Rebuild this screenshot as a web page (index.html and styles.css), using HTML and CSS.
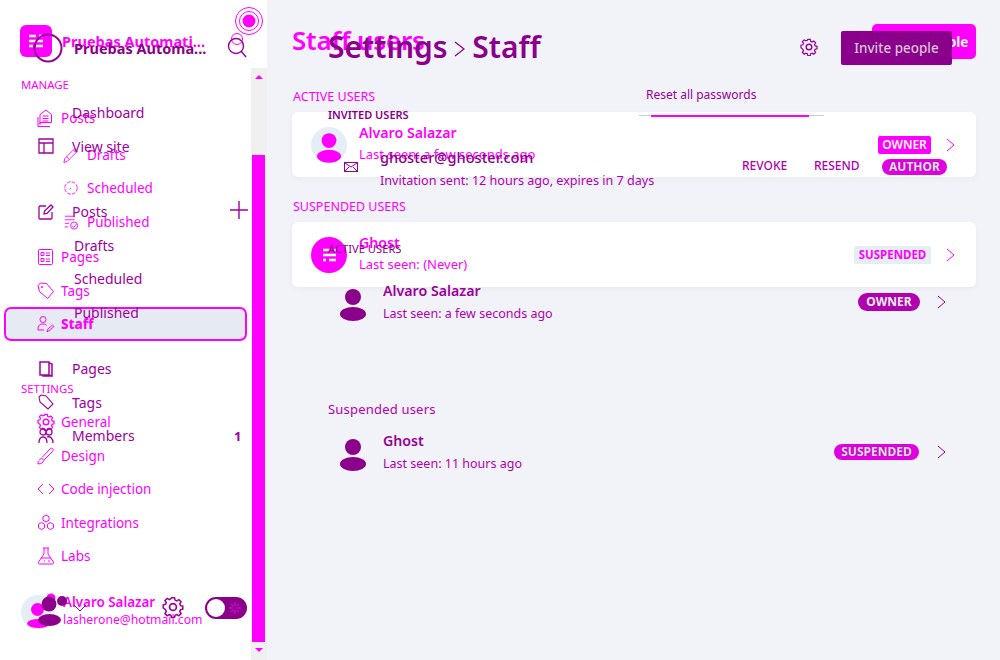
FILE: index.html
```html
<!DOCTYPE html>
<html lang="es">
<head>
<meta charset="UTF-8">
<title>Staff</title>
<link rel="stylesheet" href="styles.css">
</head>
<body>
<svg class="defs" width="0" height="0">
    <symbol id="person" viewBox="0 0 28 32">
        <circle cx="14" cy="8" r="8"/><ellipse cx="14" cy="25" rx="13" ry="7"/>
    </symbol>
    <symbol id="chevron" viewBox="0 0 10 14">
        <path d="M1 1l7 6-7 6" fill="none" stroke="currentColor"/>
    </symbol>
    <symbol id="gear" viewBox="0 0 18 18">
        <path d="M7.6 1h2.8l.5 2.2 1.5.7 2-1.1 2 2-1.2 1.9.7 1.6 2.1.5v2.8l-2.1.5-.7 1.6 1.2 1.9-2 2-2-1.1-1.5.7-.5 2.1H7.6l-.5-2.1-1.5-.7-2 1.1-2-2 1.2-1.9-.7-1.6L0 10.4V7.6l2.1-.5.7-1.6L1.6 3.6l2-2 2 1.1 1.5-.7z" transform="translate(1 .5) scale(.89)" fill="none" stroke="currentColor" stroke-width="1.4"/>
        <circle cx="9" cy="9" r="2.8" fill="none" stroke="currentColor" stroke-width="1.4"/>
    </symbol>
</svg>

<!-- capa clara: vista nueva -->
<div class="layer layer-new">
    <aside class="side">
        <div class="brand">
            <div class="logo">
                <svg width="32" height="32" viewBox="0 0 32 32"><path d="M9 11h7M19 11h4M9 16h14M9 21h4M16 21h7" stroke="#fff" stroke-width="2.5"/></svg>
            </div>
            <span class="brand-name">Pruebas Automati...</span>
            <svg class="target" width="30" height="30" viewBox="0 0 30 30"><circle cx="15" cy="15" r="13.5" fill="#fff" stroke="#f0f"/><circle cx="15" cy="15" r="9.5" fill="none" stroke="#f0f"/><circle cx="15" cy="15" r="6.5" fill="#f0f"/></svg>
            <svg class="lens-new" width="12" height="12" viewBox="0 0 12 12"><circle cx="6" cy="6" r="5.5" fill="none" stroke="#f0f"/></svg>
        </div>
        <div class="side-body">
            <nav class="nav">
                <div class="nav-head">MANAGE</div>
                <a class="item">
                    <svg class="ico" viewBox="0 0 18 18"><path d="M3 15.5V5.5L9 1l5.5 4.5v8H3zM1 17.5h12M1 8v9.5M5.5 7h6M5.5 9.5h6M5.5 12h6" fill="none" stroke="currentColor"/></svg>Posts
                </a>
                <div class="sub">
                    <a class="item">
                        <svg class="ico" viewBox="0 0 18 18"><path d="M2 13L13 2l3 3L5 16l-4 1.5zM4 11l3 3M12 4l2 2" fill="none" stroke="currentColor"/></svg>Drafts
                    </a>
                    <a class="item">
                        <svg class="ico" viewBox="0 0 18 18"><circle cx="9" cy="9" r="7" fill="none" stroke="currentColor" stroke-dasharray="4 1.5"/><path d="M9 9l-1.5 1.5" stroke="currentColor"/></svg>Scheduled
                    </a>
                    <a class="item">
                        <svg class="ico" viewBox="0 0 18 18"><path d="M2 2.5h11M2 6.5h11M2 10.5h5M2 14.5h4M10 13l2 2 3-3.5" fill="none" stroke="currentColor"/><circle cx="12.5" cy="13" r="4" fill="none" stroke="currentColor"/></svg>Published
                    </a>
                </div>
                <a class="item">
                    <svg class="ico" viewBox="0 0 18 18"><rect x="1.5" y="1.5" width="14" height="15" rx="1" fill="none" stroke="currentColor"/><path d="M4 4.5h3v3H4zM4 10.5h3v3H4zM9 5h4M9 7.5h4M9 11h4M9 13.5h4" fill="none" stroke="currentColor"/></svg>Pages
                </a>
                <a class="item">
                    <svg class="ico" viewBox="0 0 18 18"><path d="M1 3.5L3.5 1l6 .5 7 8-6 7-8-7z" fill="none" stroke="currentColor"/><circle cx="5" cy="5" r="1" fill="currentColor"/></svg>Tags
                </a>
                <a class="item current">
                    <svg class="ico" viewBox="0 0 18 18"><circle cx="6" cy="4.5" r="3" fill="none" stroke="currentColor"/><path d="M1 15c0-5 2-6 5-6 2 0 3 .5 3.5 1.5M1 15h6M11 16l-1 1 .5-2.5 5-4.5 1.5 1.5-5 4.5z" fill="none" stroke="currentColor"/></svg>Staff
                </a>
                <div class="nav-head settings">SETTINGS</div>
                <a class="item">
                    <svg class="ico" viewBox="0 0 18 18"><use href="#gear"/></svg>General
                </a>
                <a class="item">
                    <svg class="ico" viewBox="0 0 18 18"><path d="M1 17c0-3 .5-3 1.5-4l2-2 2.5 2.5-2 2.5c-1 1-2.500.5-4 1zM5 10.500L13 2c1-1 2.500-1 3 0s0 2-1 3l-8 8" fill="none" stroke="currentColor"/></svg>Design
                </a>
                <a class="item">
                    <svg class="ico" viewBox="0 0 18 18"><path d="M6 4L1 9l5 5M12 4l5 5-5 5" fill="none" stroke="currentColor"/></svg>Code injection
                </a>
                <a class="item">
                    <svg class="ico" viewBox="0 0 18 18"><path d="M9 1l3 1.8v3.4L9 8 6 6.2V2.8zM4.5 8.5l3 1.8v3.4l-3 1.8-3-1.8v-3.4zM13.5 8.5l3 1.8v3.4l-3 1.8-3-1.8v-3.4z" fill="none" stroke="currentColor"/></svg>Integrations
                </a>
                <a class="item">
                    <svg class="ico" viewBox="0 0 18 18"><path d="M6 1h6M7 1v6l-5.500 8c-.5 1 0 2 1 2h13c1 0 1.500-1 1-2L11 7V1M4 11h10M7 14h1M11 14h2" fill="none" stroke="currentColor"/></svg>Labs
                </a>
                <div class="me">
                    <svg class="me-pic" width="34" height="34" viewBox="0 0 34 34"><circle cx="17" cy="17" r="17" fill="#e6eef5"/><circle cx="16.5" cy="14.5" r="6.5" fill="#f0f"/><ellipse cx="17.5" cy="28.5" rx="11.5" ry="4.5" fill="#f0f"/><circle cx="30" cy="3" r="4.5" fill="#f0f"/></svg>
                    <div>
                        <div class="me-name">Alvaro Salazar</div>
                        <div class="me-mail">lasherone@hotmail.com</div>
                    </div>
                </div>
            </nav>
            <div class="scroll">
                <i class="arrow-up"></i>
                <i class="thumb"></i>
                <i class="arrow-down"></i>
            </div>
        </div>
    </aside>
    <main class="main">
        <header class="top">
            <h1>Staff users</h1>
            <button class="invite">Invite people</button>
        </header>
        <h2 class="sect">ACTIVE USERS</h2>
        <div class="card">
            <div class="pic"><svg width="26" height="30"><use href="#person"/></svg></div>
            <div class="who">
                <div class="name">Alvaro Salazar</div>
                <div class="seen">Last seen: a few seconds ago</div>
            </div>
            <span class="tag tag-on">OWNER</span>
            <svg class="chev" width="10" height="14"><use href="#chevron"/></svg>
        </div>
        <h2 class="sect">SUSPENDED USERS</h2>
        <div class="card">
            <div class="pic pic-ghost">
                <svg width="36" height="36" viewBox="0 0 36 36"><path d="M12 13h7M22 13h3M12 18h13M12 23h3M18 23h7" stroke="#fff" stroke-width="2.5"/></svg>
            </div>
            <div class="who">
                <div class="name">Ghost</div>
                <div class="seen">Last seen: (Never)</div>
            </div>
            <span class="tag tag-off">SUSPENDED</span>
            <svg class="chev" width="10" height="14"><use href="#chevron"/></svg>
        </div>
    </main>
</div>

<!-- capa oscura: vista anterior -->
<div class="layer layer-old">
    <aside class="side-old">
        <div class="brand-old">
            <svg class="ring" width="30" height="30" viewBox="0 0 30 30"><circle cx="15" cy="15" r="13.5" fill="none" stroke="currentColor" stroke-width="2"/></svg>
            <span class="brand-name">Pruebas Automa...</span>
            <svg class="lens" width="20" height="22" viewBox="0 0 20 22"><circle cx="9" cy="9" r="7.5" fill="none" stroke="currentColor" stroke-width="1.4"/><path d="M14 14l5 6" stroke="currentColor" stroke-width="1.4"/></svg>
        </div>
        <nav class="nav-old">
            <a class="link"><i class="ico-old"></i>Dashboard</a>
            <a class="link">
                <svg class="ico-old" viewBox="0 0 16 16"><path d="M1 1h14v14H1zM1 5h14M6 5v10" fill="none" stroke="currentColor" stroke-width="1.3"/></svg>View site
            </a>
            <a class="link gap-top">
                <svg class="ico-old" viewBox="0 0 16 16"><path d="M8 2H2c-1 0-1 .5-1 1v11c0 1 .5 1 1 1h11c1 0 1-.5 1-1V8M6 10l.5-3L13 1l2 2-6 6.5z" fill="none" stroke="currentColor" stroke-width="1.3"/></svg>Posts
                <svg class="plus" width="18" height="18" viewBox="0 0 18 18"><path d="M9 0v18M0 9h18" stroke="currentColor" stroke-width="1.4"/></svg>
            </a>
            <a class="link sub-link">Drafts</a>
            <a class="link sub-link">Scheduled</a>
            <a class="link sub-link">Published</a>
            <a class="link gap-pages">
                <svg class="ico-old" viewBox="0 0 16 16"><path d="M2 1h9v13H2zM11 2l3 1v12l-3-1M5 14v1h9" fill="none" stroke="currentColor" stroke-width="1.5"/></svg>Pages
            </a>
            <a class="link">
                <svg class="ico-old" viewBox="0 0 16 16"><path d="M1 3l2-2 5 1 7 8-5 5-8-7z" fill="none" stroke="currentColor" stroke-width="1.1"/></svg>Tags
            </a>
            <a class="link">
                <svg class="ico-old" viewBox="0 0 16 16"><circle cx="5" cy="4" r="3" fill="none" stroke="currentColor" stroke-width="1.3"/><circle cx="11" cy="4" r="3" fill="none" stroke="currentColor" stroke-width="1.3"/><path d="M1 15c0-5 2-6 4-6s4 1 4 6M9 9c3-1 6 1 6 6" fill="none" stroke="currentColor" stroke-width="1.3"/></svg>Members<b class="count">1</b>
            </a>
        </nav>
        <div class="foot">
            <svg class="foot-pic" width="30" height="30" viewBox="0 0 30 30"><circle cx="11" cy="8" r="7.5"/><ellipse cx="11.5" cy="24" rx="11.5" ry="6"/><circle cx="24" cy="5" r="5"/></svg>
            <svg class="foot-caret" width="14" height="8" viewBox="0 0 14 8"><path d="M1 1l6 6 6-6" fill="none" stroke="currentColor"/></svg>
            <svg class="foot-gear" width="22" height="22"><use href="#gear"/></svg>
            <div class="toggle">
                <i class="knob"></i>
                <svg class="sun" width="12" height="12" viewBox="0 0 12 12"><path d="M6 0v4M6 8v4M0 6h4M8 6h4M2 2l2 2M8 8l2 2M2 10l2-2M8 4l2-2" stroke="#f0f"/></svg>
            </div>
        </div>
    </aside>
    <main class="main-old">
        <header class="top-old">
            <h1>Settings <svg width="12" height="18" viewBox="0 0 12 18"><path d="M1 2l9 7-9 7" fill="none" stroke="currentColor" stroke-width="1.2"/></svg> Staff</h1>
            <svg class="top-gear" width="18" height="18"><use href="#gear"/></svg>
            <button class="invite-old">Invite people</button>
        </header>
        <div class="invited-head">
            <h2>INVITED USERS</h2>
            <a class="reset">Reset all passwords</a>
            <i class="rule"></i>
        </div>
        <div class="row-invite">
            <svg class="mail" width="14" height="12" viewBox="0 0 14 12"><rect x=".5" y="1.5" width="13" height="9" fill="none" stroke="currentColor"/><path d="M1 2l6 4 6-4M1 10l4-4M13 10L9 6" fill="none" stroke="currentColor"/></svg>
            <div>
                <div class="mail-name">ghoster@ghoster.com</div>
                <div class="seen-old">Invitation sent: 12 hours ago, expires in 7 days</div>
            </div>
            <a class="act">REVOKE</a>
            <a class="act">RESEND</a>
            <span class="pill pill-line">AUTHOR</span>
        </div>
        <h2 class="active-head">ACTIVE USERS</h2>
        <div class="row-user">
            <svg class="person" width="28" height="32"><use href="#person"/></svg>
            <div class="who-old">
                <div class="name-old">Alvaro Salazar</div>
                <div class="seen-old">Last seen: a few seconds ago</div>
            </div>
            <span class="pill pill-fill">OWNER</span>
            <svg class="chev-old" width="10" height="14"><use href="#chevron"/></svg>
        </div>
        <h3 class="susp-head">Suspended users</h3>
        <div class="row-user">
            <svg class="person" width="28" height="32"><use href="#person"/></svg>
            <div class="who-old">
                <div class="name-old">Ghost</div>
                <div class="seen-old">Last seen: 11 hours ago</div>
            </div>
            <span class="pill pill-line pill-susp">SUSPENDED</span>
            <svg class="chev-old" width="10" height="14"><use href="#chevron"/></svg>
        </div>
    </main>
</div>
</body>
</html>
```

FILE: styles.css
```css
* {
    box-sizing: border-box;
}
body {
    margin: 0;
    width: 1000px;
    height: 660px;
    position: relative;
    overflow: hidden;
    background: #f1f3f8;
    font-family: "Noto Sans", sans-serif;
}
h1, h2, h3 {
    margin: 0;
}
.defs {
    position: absolute;
}
.layer {
    position: absolute;
    top: 0;
    left: 0;
    width: 1000px;
    height: 660px;
    display: flex;
}

/* capa clara */
.layer-new {
    color: #f0f;
}
.side {
    width: 267px;
    background: #fff;
    display: flex;
    flex-direction: column;
}
.brand {
    height: 68px;
    padding: 25px 0 0 20px;
    display: flex;
    position: relative;
}
.logo {
    width: 32px;
    height: 32px;
    background: #f0f;
    border-radius: 6px;
}
.brand-name {
    font-size: 14.5px;
    font-weight: 700;
    line-height: 32px;
    margin-left: 10px;
    white-space: nowrap;
}
.target {
    position: absolute;
    left: 234px;
    top: 6px;
}
.lens-new {
    position: absolute;
    left: 231px;
    top: 33px;
}
.side-body {
    flex: 1;
    display: flex;
    min-height: 0;
}
.nav {
    flex: 1;
    min-width: 0;
    position: relative;
}
.nav-head {
    font-size: 11.4px;
    line-height: 18px;
    margin: 8px 0 7.2px 21px;
}
.nav-head.settings {
    margin-top: 39.1px;
}
.item {
    height: 33.5px;
    display: flex;
    align-items: center;
    padding-left: 37px;
    font-size: 13.5px;
    color: #f0f;
}
.ico {
    width: 18px;
    height: 18px;
    margin-right: 6px;
    flex: none;
}
.sub {
    margin: 3.2px 0 2.2px;
}
.sub .item {
    padding-left: 63px;
}
.sub .ico {
    width: 16px;
    height: 16px;
    margin-right: 8px;
}
.current {
    margin-left: 4px;
    padding-left: 31px;
    width: 243px;
    height: 34px;
    margin-top: -.6px;
    background: #e6eaf3;
    border: 2px solid #f0f;
    border-radius: 7px;
    font-weight: 800;
}
.me {
    display: flex;
    gap: 8px;
    margin: 19.9px 0 0 21px;
    align-items: flex-start;
}
.me-pic {
    flex: none;
    margin-top: 2px;
    overflow: visible;
}
.me-name {
    font-size: 13.4px;
    font-weight: 600;
    line-height: 18px;
}
.me-mail {
    font-size: 12.2px;
    line-height: 18px;
}
.scroll {
    width: 16px;
    background: #f0f0f0;
    display: flex;
    flex-direction: column;
    align-items: center;
}
.arrow-up, .arrow-down {
    width: 0;
    height: 0;
    border-left: 4px solid transparent;
    border-right: 4px solid transparent;
}
.arrow-up {
    border-bottom: 4px solid #f0f;
    margin-top: 7px;
}
.arrow-down {
    border-top: 4px solid #f0f;
    margin-top: 6px;
}
.thumb {
    width: 13px;
    height: 487px;
    margin: 76px 0 0 -1px;
    background: #f0f;
}

.main {
    flex: 1;
    padding: 21px 24px 0 25px;
}
.top {
    height: 38px;
    display: flex;
    justify-content: space-between;
    align-items: flex-start;
}
.top h1 {
    font-size: 26px;
    font-weight: 600;
    line-height: 38px;
    letter-spacing: -.2px;
}
.invite {
    width: 104px;
    height: 35px;
    margin-top: 3px;
    border: 0;
    border-radius: 5px;
    background: #f0f;
    color: #fff;
    font: 700 13.5px "Noto Sans", sans-serif;
    white-space: nowrap;
    padding: 0;
}
.sect {
    font-size: 12.5px;
    font-weight: 400;
    line-height: 18px;
    margin: 29px 0 6px 1px;
}
.card + .sect {
    margin-top: 21px;
}
.card {
    height: 65px;
    background: #fff;
    border-radius: 6px;
    box-shadow: 0 2px 6px #0000000a;
    display: flex;
    align-items: center;
    padding: 0 20px 0 19px;
}
.pic {
    width: 36px;
    height: 36px;
    border-radius: 50%;
    background: #e6eef5;
    display: flex;
    align-items: flex-end;
    justify-content: center;
    fill: #f0f;
    overflow: hidden;
}
.pic-ghost {
    background: #f0f;
}
.who {
    margin-left: 12px;
    flex: 1;
    padding-bottom: 3px;
}
.name {
    font-size: 14.2px;
    font-weight: 600;
    line-height: 20px;
}
.seen {
    font-size: 13px;
    line-height: 18px;
    margin-top: 2px;
}
.tag {
    font-size: 12px;
    font-weight: 600;
    height: 18px;
    line-height: 18px;
    text-align: center;
    border-radius: 2px;
}
.tag-on {
    width: 53px;
    background: #f0f;
    color: #fff;
}
.tag-off {
    width: 77px;
    background: #e6eef5;
    color: #f0f;
    font-size: 11.5px;
    font-weight: 700;
}
.chev {
    margin-left: 15px;
}

/* capa oscura */
.layer-old {
    color: #9a009a;
}
.side-old {
    width: 267px;
    flex: none;
    position: relative;
}
.brand-old {
    display: flex;
    align-items: center;
    height: 32px;
    margin-top: 32px;
    padding-left: 33px;
}
.brand-old .brand-name {
    margin-left: 11px;
    color: #8b008b;
}
.lens {
    margin-left: 21px;
}
.nav-old {
    margin-top: 32px;
}
.link {
    height: 33.5px;
    display: flex;
    align-items: center;
    position: relative;
    padding-left: 38px;
    font-size: 14px;
    color: #a000a0;
}
.ico-old {
    width: 16px;
    height: 16px;
    margin-right: 18px;
    flex: none;
}
.gap-top {
    margin-top: 32px;
}
.gap-pages {
    margin-top: 22.8px;
}
.sub-link {
    padding-left: 74px;
}
.plus {
    position: absolute;
    left: 230px;
    top: 6px;
}
.count {
    position: absolute;
    left: 234px;
    font-size: 13px;
}
.foot {
    position: absolute;
    left: 0;
    top: 590px;
    width: 267px;
    height: 36px;
}
.foot-pic {
    position: absolute;
    left: 38px;
    top: 6px;
    fill: #8b008b;
    overflow: visible;
}
.foot-caret {
    position: absolute;
    left: 73px;
    top: 14px;
}
.foot-gear {
    position: absolute;
    left: 162px;
    top: 6px;
}
.toggle {
    position: absolute;
    left: 205px;
    top: 7px;
    width: 42px;
    height: 22px;
    border-radius: 11px;
    background: #8b008b;
}
.knob {
    position: absolute;
    left: 2px;
    top: 2px;
    width: 18px;
    height: 18px;
    border-radius: 50%;
    background: #fff;
}
.sun {
    position: absolute;
    left: 24px;
    top: 5px;
}

.main-old {
    flex: 1;
    padding: 27px 46px 0 61px;
}
.top-old {
    height: 40px;
    display: flex;
    align-items: center;
}
.top-old h1 {
    flex: 1;
    font-size: 30px;
    font-weight: 600;
    line-height: 40px;
    color: #8b008b;
    white-space: nowrap;
}
.top-old h1 svg {
    margin: 0 -1.5px;
}
.top-gear {
    margin-right: 23px;
}
.invite-old {
    width: 111px;
    height: 34px;
    margin: 2px 2px 0 0;
    border: 0;
    border-radius: 2px;
    background: #8b008b;
    color: #d9c3d9;
    font: 500 13.5px "Noto Sans", sans-serif;
}
.invited-head {
    position: relative;
    height: 62px;
    margin-top: 18px;
}
.invited-head h2 {
    font-size: 11px;
    font-weight: 600;
    line-height: 16px;
    position: absolute;
    top: 22px;
    left: 0;
    color: #8b008b;
}
.reset {
    position: absolute;
    left: 318px;
    top: 0;
    font-size: 12px;
    line-height: 20px;
}
.rule {
    position: absolute;
    left: 311px;
    top: 30px;
    width: 185px;
    height: 1px;
    background: #ccc;
}
.rule::after {
    content: "";
    position: absolute;
    left: 12px;
    top: 0;
    width: 158px;
    height: 2px;
    background: #f0f;
}
.row-invite {
    height: 44px;
    display: flex;
    align-items: flex-start;
    position: relative;
}
.mail {
    margin: 14px 22px 0 16px;
    flex: none;
}
.mail-name {
    font-size: 14.6px;
    font-weight: 500;
    line-height: 20px;
    color: #8b008b;
}
.seen-old {
    font-size: 12.5px;
    line-height: 18px;
    margin-top: 4px;
    color: #b000b0;
    white-space: nowrap;
}
.row-invite .seen-old {
    font-size: 12.6px;
    margin-top: 5px;
}
.act {
    position: absolute;
    top: 10px;
    font-size: 12px;
    font-weight: 500;
    line-height: 18px;
    left: 414px;
    color: #b000b0;
}
.act + .act {
    left: 486px;
}
.pill {
    font-size: 12px;
    font-weight: 700;
    line-height: 16px;
    border-radius: 9px;
    text-align: center;
}
.pill-line {
    position: absolute;
    left: 554px;
    top: 12px;
    width: 65px;
    height: 16px;
    background: #e000e0;
    color: #e6e0ea;
    text-shadow: 0 0 1px #800080;
}
.row-user {
    display: flex;
    position: relative;
    align-items: center;
    height: 42px;
    padding-left: 11px;
}
.person {
    fill: #8b008b;
    flex: none;
    margin: 5px 16px 0 0;
}
.who-old {
    flex: 1;
}
.name-old {
    font-size: 14.2px;
    font-weight: 600;
    line-height: 20px;
    color: #9a009a;
}
.pill-fill {
    width: 62px;
    height: 18px;
    line-height: 18px;
    background: #b000b0;
    color: #eee;
    margin-right: 17px;
}
.pill-susp {
    left: 506px;
    top: 13px;
    width: 85px;
}
.chev-old {
    flex: none;
    margin-right: 7px;
}
.active-head {
    font-size: 11.2px;
    font-weight: 400;
    line-height: 16px;
    margin-top: 50px;
    margin-bottom: 24px;
    color: #8b008b;
}
.susp-head {
    font-size: 13px;
    font-weight: 400;
    line-height: 18px;
    letter-spacing: .2px;
    color: #b000b0;
    margin-top: 77px;
    margin-bottom: 13px;
}
```
